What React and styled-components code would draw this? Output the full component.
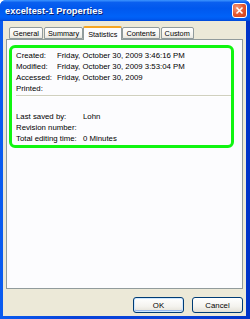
import React from 'react';
import styled, { createGlobalStyle } from 'styled-components';

const GlobalStyle = createGlobalStyle`
  html, body {
    margin: 0;
    padding: 0;
    background: #ffffff;
  }
  body {
    font-family: "Liberation Sans", Arial, sans-serif;
    font-size: 7.8px;
    color: #000000;
  }
`;

const Window = styled.div`
  width: 250px;
  height: 319px;
  display: flex;
  flex-direction: column;
  background: linear-gradient(90deg, #0a5cf0, #0842d9 30%, #0842d9 70%, #0033c8);
  border-radius: 6px 6px 0 0;
  overflow: hidden;
`;

const TitleBar = styled.div`
  height: 21px;
  flex: none;
  display: flex;
  align-items: center;
  justify-content: space-between;
  padding: 0 3px 0 5px;
  background: linear-gradient(
    #3d95ff 0%,
    #0a5fef 12%,
    #0058ee 40%,
    #0062f8 80%,
    #0058ee 92%,
    #0047d6 100%
  );
`;

const Title = styled.span`
  color: #ffffff;
  font-weight: bold;
  font-size: 9.2px;
  letter-spacing: 0.1px;
  text-shadow: 1px 1px 0 #0a1f6e;
`;

const CloseButton = styled.div`
  width: 15px;
  height: 15px;
  box-sizing: border-box;
  border: 1px solid #ffffff;
  border-radius: 3px;
  background: radial-gradient(circle at 30% 30%, #f59a7a 0%, #e2542c 55%, #c8401a 100%);
  display: flex;
  align-items: center;
  justify-content: center;
`;

const Body = styled.div`
  flex: 1;
  display: flex;
  flex-direction: column;
  background: #ece9d8;
  margin: 0 4px 3px 3px;
  padding: 4px 3px 0 3px;
`;

const TabRow = styled.div`
  display: flex;
  align-items: flex-end;
  padding-left: 3px;
  height: 14px;
  position: relative;
  z-index: 1;
`;

const Tab = styled.div`
  box-sizing: border-box;
  height: ${p => (p.active ? '14px' : '12px')};
  margin-bottom: ${p => (p.active ? '-1px' : '0')};
  padding: 0 ${p => (p.active ? '4px' : '3px')};
  margin-right: ${p => (p.active ? '0' : '1px')};
  margin-left: ${p => (p.active ? '-1px' : '0')};
  display: flex;
  align-items: center;
  font-size: 7.3px;
  border: 1px solid #919b9c;
  border-bottom: ${p => (p.active ? 'none' : '1px solid #919b9c')};
  border-top: ${p => (p.active ? '2px solid #f5a623' : '1px solid #919b9c')};
  border-radius: 2px 2px 0 0;
  background: ${p =>
    p.active ? '#fcfcfe' : 'linear-gradient(#ffffff, #f4f3ee 70%, #e8e7e0)'};
`;

const Panel = styled.div`
  box-sizing: border-box;
  width: 237px;
  height: 250px;
  border: 1px solid #919b9c;
  background: #fcfcfe;
  padding: 5px 8px 0 2px;
`;

const Highlight = styled.div`
  border: 3px solid #10f510;
  border-radius: 6px;
  padding: 2px 0 1px 4px;
`;

const Row = styled.div`
  display: flex;
  height: 11px;
  line-height: 11px;
  white-space: nowrap;
`;

const Label = styled.span`
  width: ${p => p.w}px;
  flex: none;
`;

const Separator = styled.div`
  height: 1px;
  border-top: 1px solid #d0d0bf;
  background: #ffffff;
  margin: 1px 0 14px;
`;

const ButtonRow = styled.div`
  display: flex;
  justify-content: flex-end;
  gap: 8px;
  padding-top: 8px;
`;

const Button = styled.div`
  box-sizing: border-box;
  width: 51px;
  height: 16px;
  border: 1px solid #003c74;
  border-radius: 3px;
  display: flex;
  align-items: center;
  justify-content: center;
  font-size: 7.8px;
  background: linear-gradient(#ffffff, #f4f3ee 60%, #e3e0d6);
  box-shadow: ${p =>
    p.primary ? 'inset 0 0 0 1px #cee7ff, inset 0 -1px 0 1px #98b8ea' : 'none'};
`;

const statsTop = [
  ['Created:', 'Friday, October 30, 2009 3:46:16 PM'],
  ['Modified:', 'Friday, October 30, 2009 3:53:04 PM'],
  ['Accessed:', 'Friday, October 30, 2009'],
  ['Printed:', ''],
];

const statsBottom = [
  ['Last saved by:', 'Lohn'],
  ['Revision number:', ''],
  ['Total editing time:', '0 Minutes'],
];

const tabs = ['General', 'Summary', 'Statistics', 'Contents', 'Custom'];

const App = () => (
  <>
    <GlobalStyle />
    <Window>
      <TitleBar>
        <Title>exceltest-1 Properties</Title>
        <CloseButton>
          <svg width="9" height="9" viewBox="0 0 9 9">
            <path d="M1.5 1.5 L7.5 7.5 M7.5 1.5 L1.5 7.5" stroke="#ffffff" strokeWidth="1.6" />
          </svg>
        </CloseButton>
      </TitleBar>
      <Body>
        <TabRow>
          {tabs.map(t => (
            <Tab key={t} active={t === 'Statistics'}>
              {t}
            </Tab>
          ))}
        </TabRow>
        <Panel>
          <Highlight>
            {statsTop.map(([l, v]) => (
              <Row key={l}>
                <Label w={41}>{l}</Label>
                <span>{v}</span>
              </Row>
            ))}
            <Separator />
            {statsBottom.map(([l, v]) => (
              <Row key={l}>
                <Label w={67}>{l}</Label>
                <span>{v}</span>
              </Row>
            ))}
          </Highlight>
        </Panel>
        <ButtonRow>
          <Button primary>OK</Button>
          <Button>Cancel</Button>
        </ButtonRow>
      </Body>
    </Window>
  </>
);

export default App;
